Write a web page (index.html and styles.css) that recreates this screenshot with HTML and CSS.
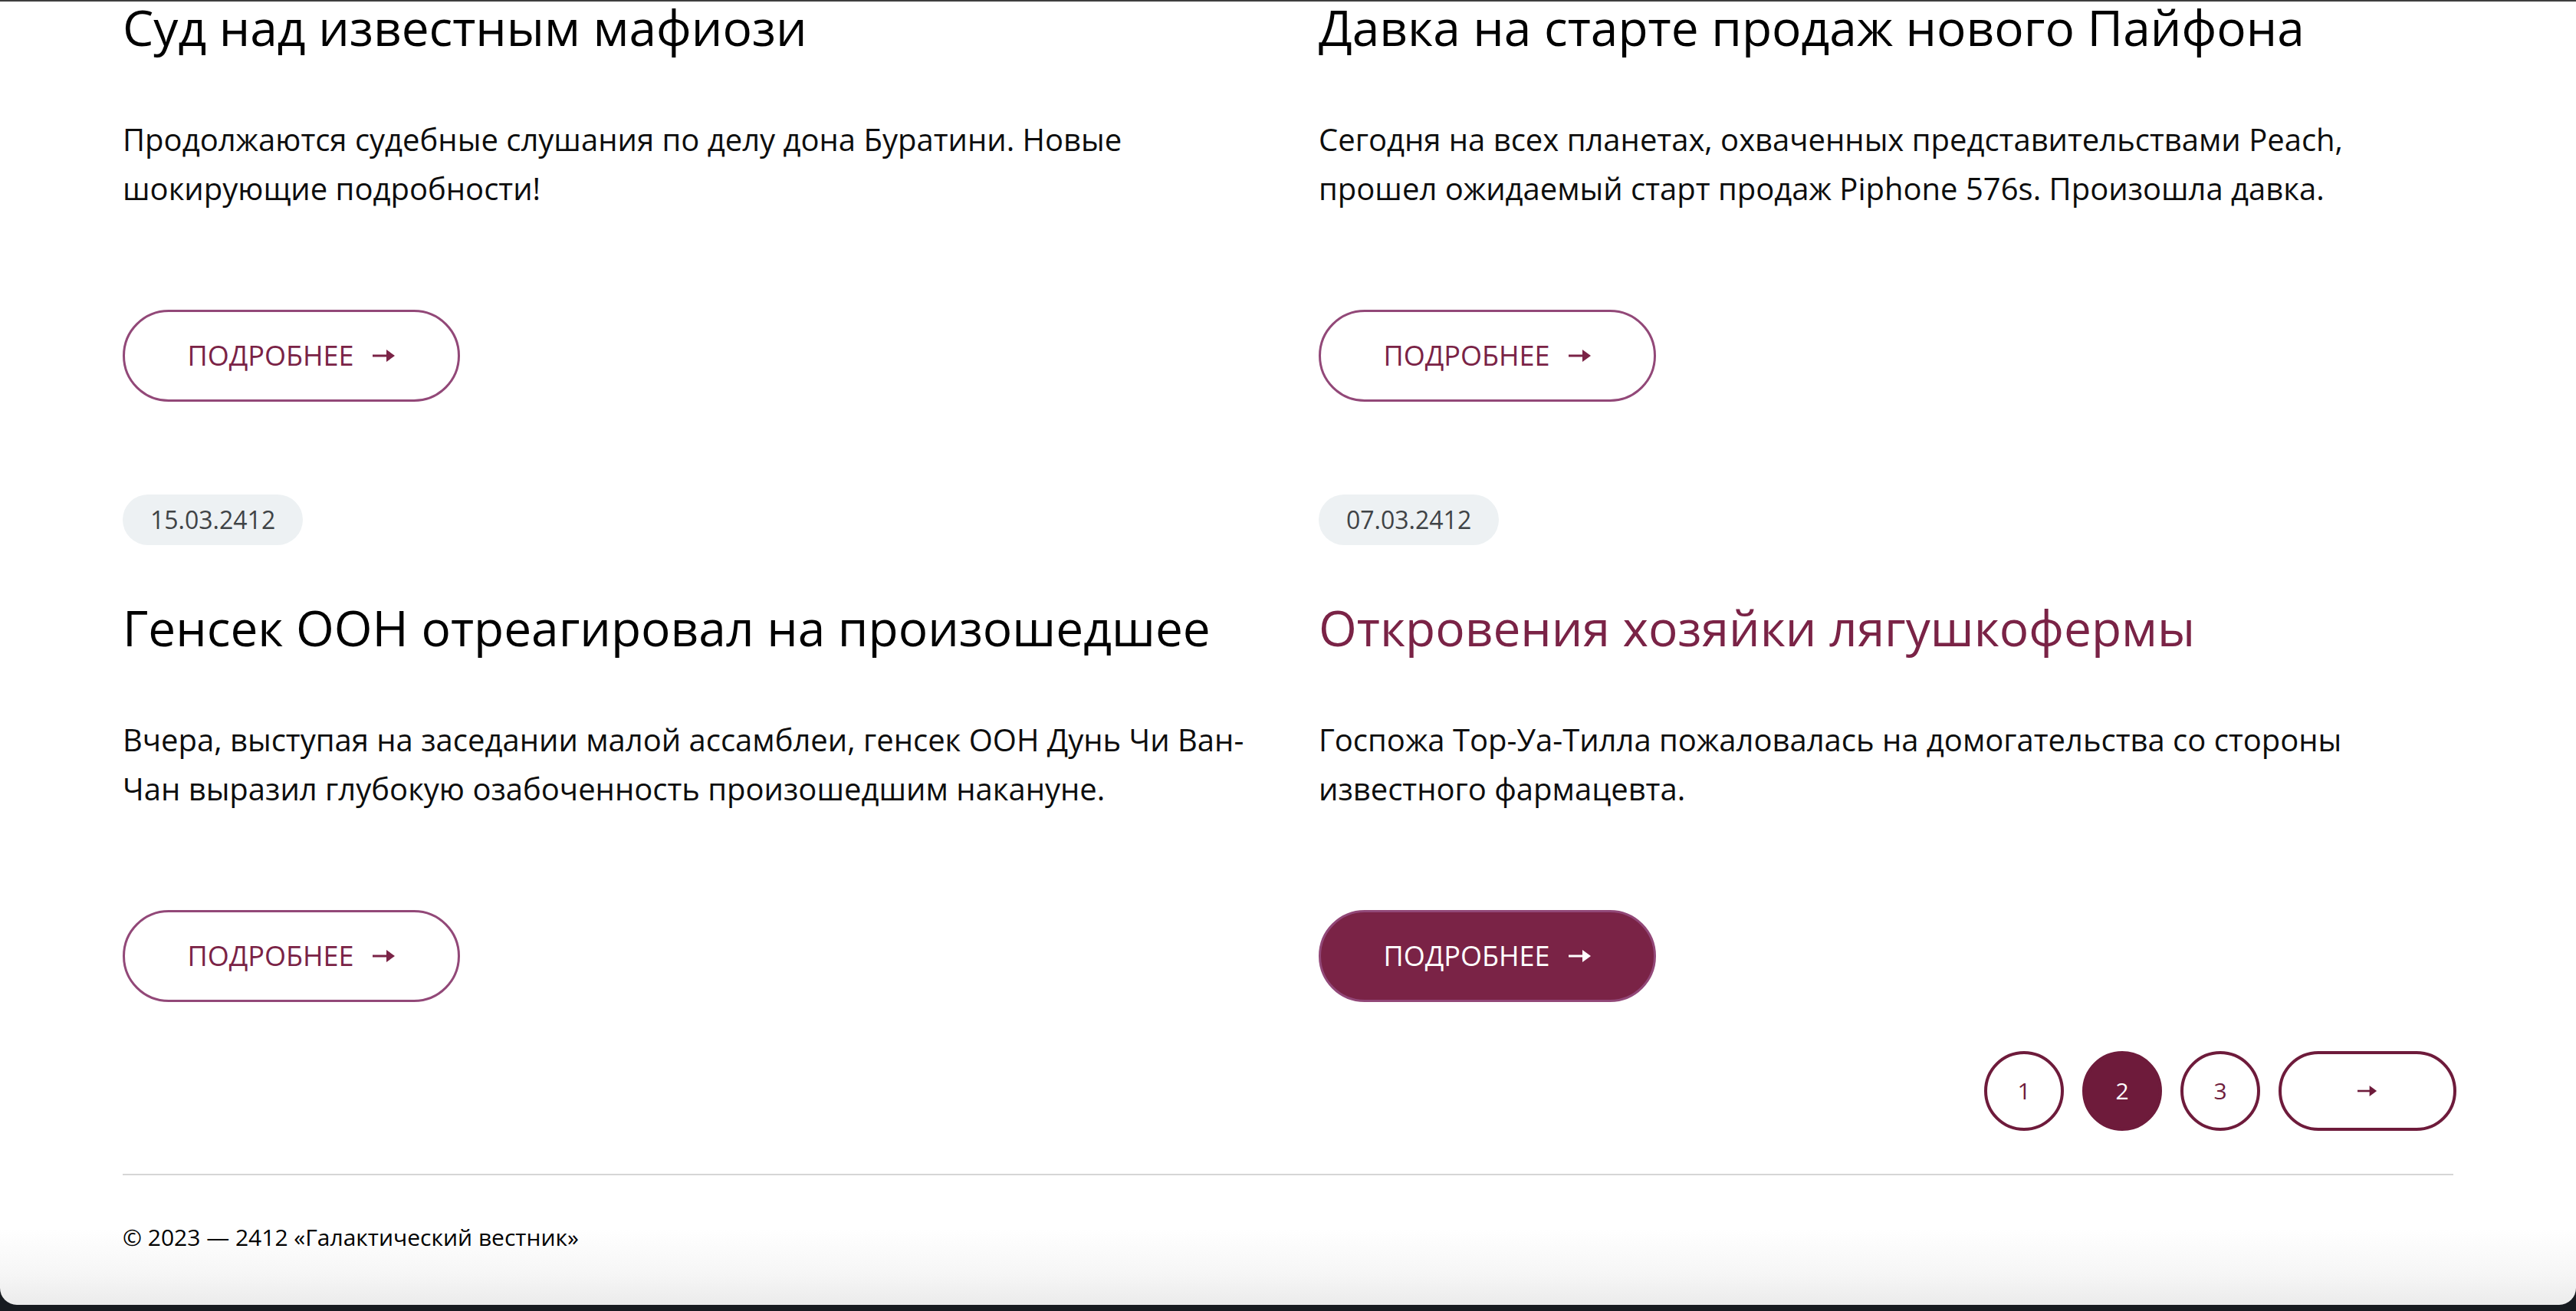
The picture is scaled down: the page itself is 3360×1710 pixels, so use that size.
FILE: index.html
```html
<!DOCTYPE html>
<html lang="ru">
<head>
<meta charset="utf-8">
<title>Галактический вестник — новости, стр. 2</title>
<link rel="stylesheet" href="styles.css">
</head>
<body>
<div class="window">
  <main class="page">
    <section class="news">
      <article class="card card--cut">
        <h2 class="card__title">Суд над известным мафиози</h2>
        <p class="card__text">Продолжаются судебные слушания по делу дона Буратини. Новые шокирующие подробности!</p>
        <a class="more" href="#">ПОДРОБНЕЕ <svg class="more__arrow" viewBox="0 0 30 18" width="30" height="18"><rect x="0" y="7.5" width="20" height="3" fill="currentColor"/><path d="M18 1 L29 9 L18 17 Z" fill="currentColor"/></svg></a>
      </article>
      <article class="card card--cut">
        <h2 class="card__title">Давка на старте продаж нового Пайфона</h2>
        <p class="card__text">Сегодня на всех планетах, охваченных представительствами Peach, прошел ожидаемый старт продаж Piphone 576s. Произошла давка.</p>
        <a class="more" href="#">ПОДРОБНЕЕ <svg class="more__arrow" viewBox="0 0 30 18" width="30" height="18"><rect x="0" y="7.5" width="20" height="3" fill="currentColor"/><path d="M18 1 L29 9 L18 17 Z" fill="currentColor"/></svg></a>
      </article>
      <article class="card">
        <span class="card__date">15.03.2412</span>
        <h2 class="card__title">Генсек ООН отреагировал на произошедшее</h2>
        <p class="card__text">Вчера, выступая на заседании малой ассамблеи, генсек ООН Дунь Чи Ван-Чан выразил глубокую озабоченность произошедшим накануне.</p>
        <a class="more" href="#">ПОДРОБНЕЕ <svg class="more__arrow" viewBox="0 0 30 18" width="30" height="18"><rect x="0" y="7.5" width="20" height="3" fill="currentColor"/><path d="M18 1 L29 9 L18 17 Z" fill="currentColor"/></svg></a>
      </article>
      <article class="card card--active">
        <span class="card__date">07.03.2412</span>
        <h2 class="card__title">Откровения хозяйки лягушкофермы</h2>
        <p class="card__text">Госпожа Тор-Уа-Тилла пожаловалась на домогательства со стороны известного фармацевта.</p>
        <a class="more" href="#">ПОДРОБНЕЕ <svg class="more__arrow" viewBox="0 0 30 18" width="30" height="18"><rect x="0" y="7.5" width="20" height="3" fill="currentColor"/><path d="M18 1 L29 9 L18 17 Z" fill="currentColor"/></svg></a>
      </article>
    </section>

    <nav class="pager">
      <a class="pager__item" href="#">1</a>
      <a class="pager__item pager__item--current" href="#">2</a>
      <a class="pager__item" href="#">3</a>
      <a class="pager__item pager__item--next" href="#"><svg class="pager__arrow" viewBox="0 0 30 18" width="26" height="16"><rect x="0" y="7.5" width="20" height="3" fill="currentColor"/><path d="M18 1 L29 9 L18 17 Z" fill="currentColor"/></svg></a>
    </nav>

    <footer class="footer">
      <p class="footer__copy">© 2023 — 2412 «Галактический вестник»</p>
    </footer>
  </main>
</div>
</body>
</html>
```

FILE: styles.css
```css
html, body {
  margin: 0;
  padding: 0;
}

body {
  background: #171b20;
  height: 1710px;
  overflow: hidden;
  font-family: "Open Sans", "Noto Sans", sans-serif;
  color: #000;
}

.window {
  height: 1700px;
  background: linear-gradient(to bottom, #ffffff 0, #ffffff 1600px, #f6f6f6 1660px, #ebebeb 1700px);
  border-top: 2px solid #3e3e3e;
  border-radius: 0 0 22px 22px;
  overflow: hidden;
}

.page {
  padding: 0 160px;
}

.news {
  display: grid;
  grid-template-columns: 1fr 1fr;
  column-gap: 80px;
  row-gap: 121px;
  margin-top: -4px;
}

.card {
  display: flex;
  flex-direction: column;
  align-items: flex-start;
}

.card__date {
  display: inline-block;
  height: 66px;
  line-height: 66px;
  padding: 0 36px;
  border-radius: 33px;
  background: #edf1f3;
  color: #3f4346;
  font-size: 32px;
  margin-bottom: 70px;
}

.card__title {
  margin: 0 0 75px;
  font-size: 64px;
  line-height: 1.2;
  font-weight: 400;
  color: #000;
}

.card--active .card__title {
  color: #7a2346;
}

.card__text {
  margin: 0 0 126px;
  font-size: 40px;
  line-height: 64px;
  color: #0d0d0d;
}

.more {
  display: inline-flex;
  align-items: center;
  justify-content: center;
  gap: 24px;
  box-sizing: border-box;
  height: 120px;
  width: 440px;
  border: 3px solid #924878;
  border-radius: 60px;
  color: #7a2346;
  font-size: 36px;
  text-decoration: none;
}

.more__arrow {
  display: block;
  width: 30px;
  height: 18px;
}

.card--active .more {
  background: #7a2346;
  color: #fff;
}

.pager {
  display: flex;
  justify-content: flex-end;
  gap: 24px;
  margin: 64px -4px 0 0;
}

.pager__item {
  box-sizing: border-box;
  display: flex;
  align-items: center;
  justify-content: center;
  width: 104px;
  height: 104px;
  border: 4px solid #6e1b3b;
  border-radius: 52px;
  color: #6e1b3b;
  font-size: 30px;
  text-decoration: none;
}

.pager__item--current {
  background: #6e1b3b;
  color: #fff;
}

.pager__item--next {
  width: 232px;
}

.pager__arrow {
  display: block;
}

.footer {
  margin-top: 56px;
  border-top: 2px solid #d6d6d6;
}

.footer__copy {
  margin: 60px 0 0;
  font-size: 30px;
  line-height: 1.4;
  color: #000;
}
```
